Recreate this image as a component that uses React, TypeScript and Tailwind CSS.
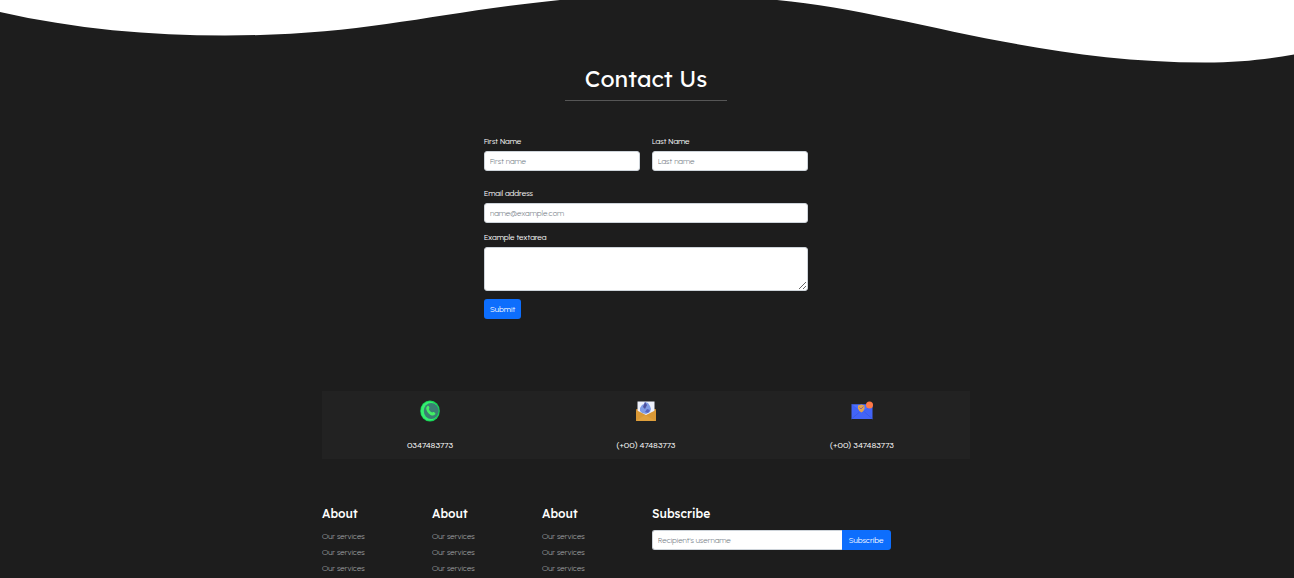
import type { ReactNode } from "react";

const fieldClass =
  "h-5 w-full min-w-0 rounded-[3px] border border-[#ced4da] bg-white px-[5px] text-[8px] leading-3 font-light text-[#212529] outline-none placeholder:text-[#6c757d] focus:border-[#86b7fe]";

function Field({ id, label, children }: { id: string; label: string; children: ReactNode }) {
  return (
    <div className="flex min-w-0 flex-col gap-1">
      <label htmlFor={id} className="text-[8px] leading-3 text-white">
        {label}
      </label>
      {children}
    </div>
  );
}

function Wave() {
  return (
    <svg viewBox="0 0 1294 64" preserveAspectRatio="none" className="block h-16 w-full" aria-hidden="true">
      <path
        fill="#fff"
        d="M0 0V12C75 29 150 35.500 225 35.500C365 35.500 430 13 560 0ZM777 0C900 11 1030 62.500 1205 62.500C1240 62.500 1268 59 1294 54.500V0Z"
      />
    </svg>
  );
}

function PhoneIcon() {
  return (
    <svg viewBox="0 0 22 22" className="size-[22px]" aria-hidden="true">
      <ellipse cx="11" cy="11" rx="9.800" ry="10.600" fill="#16d457" />
      <ellipse cx="10.500" cy="11" rx="8.600" ry="9.600" fill="#35ef70" />
      <ellipse cx="12.200" cy="11" rx="7.400" ry="8" fill="#3b7f73" />
      <path
        d="M8.200 6.200c.8-.7 1.500-.3 2 .8.500 1 .2 1.500-.4 2 .7 1.900 1.800 3 3.500 3.600.5-.8 1.200-.8 2.200-.2 1 .6 1.200 1.200.5 2-1 1.300-2.600 1.600-4.500.5C8.800 13.300 7.400 11 7.200 8.500c0-1 .3-1.800 1-2.300Z"
        fill="#42f065"
      />
    </svg>
  );
}

function LetterIcon() {
  return (
    <svg viewBox="0 0 22 22" className="size-[22px]" aria-hidden="true">
      <path d="M1 9h20v12H1Z" fill="#b87922" />
      <path d="M2.500 1.500h17v13l-8.500 4-8.500-4Z" fill="#edf0fb" />
      <path d="M5 8l2-3 2-1 1-2 3 1 2 3 1 3-1 3-4 2-4-1-2-2Z" fill="#7f9be4" />
      <path d="M10 2l2 3-2 4-2-2Z" fill="#4f529f" />
      <path d="m12 9 3 1-2 3-3-1Z" fill="#5865c0" />
      <path d="M1 10l10 5 10-5v11H1Z" fill="#d99836" />
      <path d="M1 21l9-6 11 6Z" fill="#e0a03c" />
    </svg>
  );
}

function MailIcon() {
  return (
    <svg viewBox="0 0 22 22" className="size-[22px]" aria-hidden="true">
      <path d="M0.500 4.500h21v14.500h-21Z" fill="#4264f8" />
      <path d="M0.500 4.500l10.500 8L21.500 4.500" stroke="#3c5ae8" strokeWidth="0.500" fill="#4c70ff" />
      <path d="M0.500 19l8-7M21.500 19l-8-7" stroke="#3858e0" strokeWidth="0.700" fill="none" />
      <path d="M7 5.500l3.500-1 3 1v3q-.5 2.500-3 4-3-1.500-3.500-4Z" fill="#e2a34d" />
      <path d="m8.500 7.500 1.500 1.500 2.500-2.500" stroke="#8a6790" fill="none" />
      <circle cx="18.500" cy="5" r="3.500" fill="#ff7846" />
    </svg>
  );
}

const contacts = [
  { icon: <PhoneIcon />, text: "0347483773" },
  { icon: <LetterIcon />, text: "(+00) 47483773" },
  { icon: <MailIcon />, text: "(+00) 347483773" },
];

const headingClass = "font-['Lexend','Inter',sans-serif] text-[12px] leading-4 font-medium text-white";

function LinkColumn() {
  return (
    <div className="flex flex-col gap-1.5">
      <h2 className={headingClass}>About</h2>
      <ul>
        {[0, 1, 2].map((i) => (
          <li key={i} className="flex h-4 items-center">
            <a href="#services" className="text-[8px] leading-3 font-light text-[#adb0b3]">
              Our services
            </a>
          </li>
        ))}
      </ul>
    </div>
  );
}

export default function App() {
  return (
    <div className="min-h-screen bg-[#1d1d1d] font-['Urbanist','Lato',sans-serif] text-white">
      <Wave />
      <div className="pr-0.5">
        <div className="mx-auto max-w-[648px]">
          <main>
            <h1 className="mx-auto w-1/4 border-b border-[#565656] pb-1.5 text-center font-['Lexend','Inter',sans-serif] text-[23px] leading-[30px] font-normal whitespace-nowrap">
              Contact Us
            </h1>
            <form className="mx-auto mt-[34px] flex w-1/2 flex-col items-start" onSubmit={(e) => e.preventDefault()}>
              <div className="grid w-full grid-cols-2 gap-3">
                <Field id="first" label="First Name">
                  <input id="first" type="text" placeholder="First name" className={fieldClass} />
                </Field>
                <Field id="last" label="Last Name">
                  <input id="last" type="text" placeholder="Last name" className={fieldClass} />
                </Field>
              </div>
              <div className="mt-4 flex w-full flex-col gap-2">
                <Field id="email" label="Email address">
                  <input id="email" type="email" placeholder="name@example.com" className={fieldClass} />
                </Field>
                <Field id="message" label="Example textarea">
                  <textarea
                    id="message"
                    className="block h-11 w-full resize rounded-[3px] border border-[#ced4da] bg-white px-[5px] py-1 text-[8px] leading-3 text-[#212529] outline-none"
                  />
                </Field>
              </div>
              <button type="submit" className="mt-2 h-5 rounded-[3px] bg-[#0d6efd] px-1.5 text-[8px] leading-3 text-white">
                Submit
              </button>
            </form>
            <section className="mt-18 grid grid-cols-3 bg-[#222222] pt-[9px] pb-2">
              {contacts.map((c) => (
                <div key={c.text} className="flex flex-col items-center gap-[17px]">
                  {c.icon}
                  <p className="font-['DM_Sans','Inter',sans-serif] text-[8px] leading-3">{c.text}</p>
                </div>
              ))}
            </section>
          </main>
          <footer className="mt-[47px] grid grid-cols-6 gap-x-3">
            <LinkColumn />
            <LinkColumn />
            <LinkColumn />
            <form className="col-span-3 flex flex-col gap-2" onSubmit={(e) => e.preventDefault()}>
              <h2 className={headingClass}>Subscribe</h2>
              <div className="flex w-3/4">
                <input
                  aria-label="Recipient's username"
                  type="text"
                  placeholder="Recipient's username"
                  className={fieldClass + " rounded-r-none border-r-0"}
                />
                <button type="submit" className="h-5 rounded-r-[3px] bg-[#0d6efd] px-[7px] text-[8px] leading-3 text-white">
                  Subscribe
                </button>
              </div>
            </form>
          </footer>
        </div>
      </div>
    </div>
  );
}
